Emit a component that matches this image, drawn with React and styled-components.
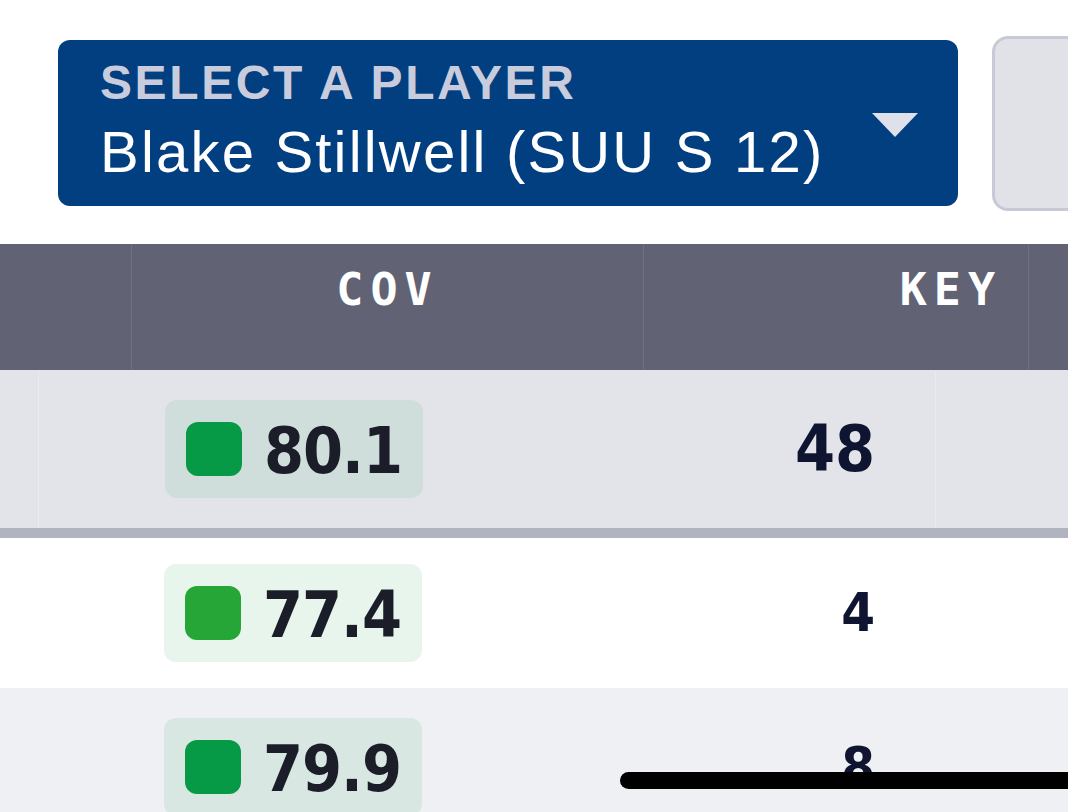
import React from "react";
import styled, { createGlobalStyle } from "styled-components";

const GlobalStyle = createGlobalStyle`
  html, body {
    margin: 0;
    padding: 0;
    background: #ffffff;
  }
  body {
    width: 1068px;
    height: 812px;
    overflow: hidden;
    font-family: "Liberation Sans", Arial, sans-serif;
  }
`;

const Screen = styled.div`
  position: relative;
  width: 1068px;
  height: 812px;
  overflow: hidden;
  background: #ffffff;
`;

const TopBar = styled.div`
  display: flex;
  align-items: center;
  gap: 34px;
  height: 244px;
  padding: 2px 0 0 58px;
  box-sizing: border-box;
`;

const PlayerSelect = styled.button`
  flex: 0 0 900px;
  height: 166px;
  display: flex;
  align-items: center;
  justify-content: space-between;
  padding: 0 40px 0 42px;
  box-sizing: border-box;
  border: none;
  border-radius: 12px;
  background: #023f80;
  text-align: left;
  cursor: pointer;
`;

const SelectText = styled.div`
  display: flex;
  flex-direction: column;
  gap: 11px;
  margin-top: -3px;
`;

const SelectLabel = styled.span`
  font-family: "Liberation Sans", Arial, sans-serif;
  font-weight: 700;
  font-size: 48px;
  line-height: 50px;
  letter-spacing: 2.6px;
  color: #c9ccdc;
`;

const SelectValue = styled.span`
  font-family: "Liberation Sans", Arial, sans-serif;
  font-size: 58px;
  line-height: 66px;
  letter-spacing: 2.2px;
  color: #ffffff;
`;

const Caret = styled.span`
  width: 0;
  height: 0;
  border-left: 23px solid transparent;
  border-right: 23px solid transparent;
  border-top: 24px solid #dfe1ea;
  margin-top: 4px;
`;

const SideButton = styled.div`
  flex: 0 0 140px;
  height: 175px;
  box-sizing: border-box;
  border: 3px solid #c8c9d6;
  border-radius: 16px;
  background: #e1e2e8;
`;

const HeaderRow = styled.div`
  display: grid;
  grid-template-columns: 131px 512px 385px 1fr;
  height: 126px;
  background: #616375;
`;

const HeaderCell = styled.div`
  display: flex;
  align-items: center;
  justify-content: ${(p) => p.$align || "center"};
  padding-right: ${(p) => p.$padRight || 0}px;
  padding-bottom: 36px;
  border-left: ${(p) => (p.$first ? "none" : "1px solid #6f7183")};
  font-family: "DejaVu Sans Mono", "Liberation Mono", monospace;
  font-weight: 700;
  font-size: 45px;
  line-height: 1;
  letter-spacing: 7px;
  color: #ffffff;
`;

const Row = styled.div`
  display: grid;
  grid-template-columns: 38px 605px 292px 1fr;
  height: ${(p) => p.$height}px;
  background: ${(p) => p.$bg};
  border-bottom: ${(p) => (p.$divider ? "10px solid #b0b3c0" : "none")};
`;

const Cell = styled.div`
  display: flex;
  align-items: center;
  justify-content: ${(p) => p.$align || "flex-start"};
  padding-left: ${(p) => p.$padLeft || 0}px;
  padding-right: ${(p) => p.$padRight || 0}px;
  border-left: ${(p) => (p.$lined ? "1px solid #eaebef" : "none")};
`;

const Grade = styled.div`
  display: flex;
  align-items: center;
  justify-content: center;
  gap: 22px;
  width: 258px;
  height: 98px;
  border-radius: 12px;
  background: ${(p) => p.$tint};
`;

const GradeDot = styled.span`
  width: 56px;
  height: 54px;
  border-radius: 12px;
  background: ${(p) => p.$color};
`;

const GradeValue = styled.span`
  font-family: "DejaVu Sans Condensed", "DejaVu Sans", sans-serif;
  font-weight: 700;
  font-size: 64px;
  letter-spacing: -1px;
  line-height: 1;
  color: #1b1d29;
  margin-top: 4px;
`;

const KeyValue = styled.span`
  font-family: "DejaVu Sans Condensed", "DejaVu Sans", sans-serif;
  font-weight: 700;
  font-size: ${(p) => p.$size}px;
  line-height: 1;
  color: #0f1431;
`;

const HomeIndicator = styled.div`
  position: absolute;
  left: 620px;
  bottom: 23px;
  width: 520px;
  height: 17px;
  border-radius: 9px;
  background: #000000;
`;

const rows = [
  { cov: "80.1", key: "48", keySize: 64, bg: "#e3e4e9", tint: "#cfdedb", dot: "#069a47", height: 158, divider: true, lined: true },
  { cov: "77.4", key: "4", keySize: 54, bg: "#ffffff", tint: "#e8f5ec", dot: "#26a637", height: 150 },
  { cov: "79.9", key: "8", keySize: 54, bg: "#eff0f3", tint: "#d9e7e2", dot: "#069a47", height: 158 },
];

export default function App() {
  return (
    <Screen>
      <GlobalStyle />
      <TopBar>
        <PlayerSelect>
          <SelectText>
            <SelectLabel>SELECT A PLAYER</SelectLabel>
            <SelectValue>Blake Stillwell (SUU S 12)</SelectValue>
          </SelectText>
          <Caret />
        </PlayerSelect>
        <SideButton />
      </TopBar>

      <HeaderRow>
        <HeaderCell $first />
        <HeaderCell>COV</HeaderCell>
        <HeaderCell $align="flex-end" $padRight={26}>KEY</HeaderCell>
        <HeaderCell />
      </HeaderRow>

      {rows.map((r) => (
        <Row key={r.cov} $bg={r.bg} $height={r.height} $divider={r.divider}>
          <Cell />
          <Cell $padLeft={126} $lined={r.lined}>
            <Grade $tint={r.tint}>
              <GradeDot $color={r.dot} />
              <GradeValue>{r.cov}</GradeValue>
            </Grade>
          </Cell>
          <Cell $align="flex-end" $padRight={60}>
            <KeyValue $size={r.keySize}>{r.key}</KeyValue>
          </Cell>
          <Cell $lined={r.lined} />
        </Row>
      ))}

      <HomeIndicator />
    </Screen>
  );
}
